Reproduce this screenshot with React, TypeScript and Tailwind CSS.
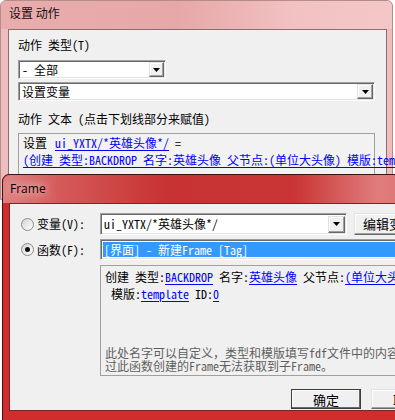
import React from 'react';

const mono = "font-['Noto_Sans_Mono_CJK_SC','Noto_Sans_CJK_SC',monospace] text-[12px] leading-[12px]";
const sunken =
  'border border-t-[#a0a0a0] border-l-[#a0a0a0] border-b-white border-r-white shadow-[inset_1px_1px_0_#696969,inset_-1px_-1px_0_#e3e3e3]';
const raised =
  'bg-[#f0f0f0] border border-t-[#e3e3e3] border-l-[#e3e3e3] border-b-[#696969] border-r-[#696969] shadow-[inset_-1px_-1px_0_#a0a0a0,inset_1px_1px_0_#ffffff]';

function DropButton({ w, h }: { w: string; h: string }) {
  return (
    <div className={`${raised} ${w} ${h} flex items-center justify-center shrink-0`}>
      <svg width="7" height="4" viewBox="0 0 7 4">
        <path d="M0 0h7L3.5 4z" fill="#000" />
      </svg>
    </div>
  );
}

function Radio({ checked }: { checked?: boolean }) {
  return (
    <div className="w-[13px] h-[13px] rounded-full border border-[#8a8a8a] bg-gradient-to-br from-[#d4d4d4] to-[#ffffff] flex items-center justify-center shrink-0">
      {checked && <div className="w-[5px] h-[5px] rounded-full bg-[#111]" />}
    </div>
  );
}

function Link({ children }: { children: React.ReactNode }) {
  return <span className="text-[#0000ff] underline underline-offset-2">{children}</span>;
}

function BackWindow() {
  return (
    <div className="absolute left-0 top-0 w-[393px] h-[200px] rounded-t-[6px] border border-[#b48c8c] bg-[#efbdbd] px-[7px] pr-[5px] flex flex-col">
      {/* title */}
      <div className="-mx-[7px] -mr-[5px] h-[28px] px-[8px] pt-[5px] bg-[linear-gradient(90deg,#e9adad_0%,#e6a7a7_45%,#f2c2c2_75%,#f4c7c7_100%)] rounded-t-[6px] text-[12px] leading-[14px] text-[#111] font-['Noto_Sans_CJK_SC',sans-serif]">
        设置 动作
      </div>
      <div className={`flex-1 border border-[#8a6f6f] bg-[#f0f0f0] pl-[9px] pt-[9px] ${mono} text-black flex flex-col items-start`}>
        <div>动作 类型(T)</div>
        <div className={`${sunken} bg-white mt-[9px] w-[148px] h-[19px] flex items-center pl-[3px] pr-[1px] justify-between`}>
          <span>- 全部</span>
          <DropButton w="w-[15px]" h="h-[15px]" />
        </div>
        <div className={`${sunken} bg-white mt-[3px] w-[357px] h-[19px] flex items-center pl-[3px] pr-[1px] justify-between`}>
          <span>设置变量</span>
          <DropButton w="w-[16px]" h="h-[15px]" />
        </div>
        <div className="mt-[12px]">动作 文本 (点击下划线部分来赋值)</div>
        <div className="mt-[8px] w-[357px] h-[45px] border border-[#a0a0a0] bg-[#f2f2f2] pl-[4px] pt-[3px] flex flex-col gap-[5px] whitespace-nowrap">
          <div>
            设置 <span className="ml-[2px]"><Link>ui_YXTX/*英雄头像*/</Link></span> =
          </div>
          <div>
            <Link>(创建 类型:BACKDROP 名字:英雄头像 父节点:(单位大头像) 模版:template ID:0)</Link>
          </div>
        </div>
      </div>
    </div>
  );
}

function FrontWindow() {
  return (
    <div className="absolute left-[2px] top-[174px] w-[470px] h-[260px] rounded-t-[7px] border border-[#3a1414] bg-[#d22d2d] px-[6px] flex flex-col">
      <div className="-mx-[6px] h-[28px] pl-[7px] flex items-center rounded-t-[7px] bg-[linear-gradient(90deg,#e08080_0%,#d55a5a_12%,#c83232_35%,#c93434_62%,#e07c7c_80%,#dc6c6c_100%)]">
        <span className="font-['Segoe_UI','Open_Sans',sans-serif] text-[12px] text-black [text-shadow:0_0_8px_rgba(255,235,235,0.95),0_0_14px_rgba(255,220,220,0.8)]">
          Frame
        </span>
      </div>
      <div className={`h-[208px] border border-[#6a2b2b] bg-[#f0f0f0] pt-[9px] ${mono} text-black flex flex-col`}>
        <div className="grid grid-cols-[90px_1fr] items-center h-[22px]">
          <div className="pl-[11px] flex items-center gap-[3px]">
            <Radio />
            <span>变量(V):</span>
          </div>
          <div className="flex items-center gap-[7px]">
            <div className={`${sunken} bg-white w-[247px] h-[22px] flex items-center justify-between pl-[3px] pr-[1px]`}>
              <span>ui_YXTX/*英雄头像*/</span>
              <DropButton w="w-[17px]" h="h-[17px]" />
            </div>
            <div className={`${raised} w-[76px] h-[22px] flex items-center pl-[8px] font-['Noto_Sans_CJK_SC',sans-serif] text-[13px]`}>
              编辑变量
            </div>
          </div>
        </div>
        <div className="grid grid-cols-[90px_1fr] items-center h-[21px] mt-[4px]">
          <div className="pl-[11px] flex items-center gap-[3px]">
            <Radio checked />
            <span>函数(F):</span>
          </div>
          <div className={`${sunken} bg-white w-[330px] h-[21px] pl-[2px] pt-[2px]`}>
            <div className="h-[15px] bg-[#3399ff] text-white flex items-center pl-[1px] whitespace-nowrap">
              [界面] - 新建Frame [Tag]
            </div>
          </div>
        </div>
        <div className="ml-[90px] mt-[5px] w-[330px] h-[111px] border border-[#a0a0a0] pl-[4px] pt-[5px] whitespace-nowrap flex flex-col">
          <div>
            创建 类型:<Link>BACKDROP</Link> 名字:<Link>英雄头像</Link> 父节点:<Link>(单位大头像)</Link>
          </div>
          <div className="mt-[5px] pl-[6px]">
            模版:<Link>template</Link> ID:<Link>0</Link>
          </div>
          <div className="mt-[46px] text-[#5f5f5f] leading-[13px]">
            <div>此处名字可以自定义，类型和模版填写fdf文件中的内容</div>
            <div>过此函数创建的Frame无法获取到子Frame。</div>
          </div>
        </div>
        <div className="mt-[13px] pl-[281px] flex gap-[10px]">
          <div className="w-[70px] h-[20px] border border-[#3c3c3c] bg-[#f0f0f0] shadow-[inset_-1px_-1px_0_#696969,inset_1px_1px_0_#ffffff] flex items-center justify-center font-['Noto_Sans_CJK_SC',sans-serif] text-[13px] leading-[13px]">
            确定
          </div>
          <div className={`${raised} w-[70px] h-[20px] flex items-center justify-center font-['Noto_Sans_CJK_SC',sans-serif] text-[13px] leading-[13px]`}>
            取消
          </div>
        </div>
      </div>
    </div>
  );
}

export default function App() {
  return (
    <div className="relative w-[395px] h-[420px] overflow-hidden bg-white">
      <BackWindow />
      <FrontWindow />
    </div>
  );
}
